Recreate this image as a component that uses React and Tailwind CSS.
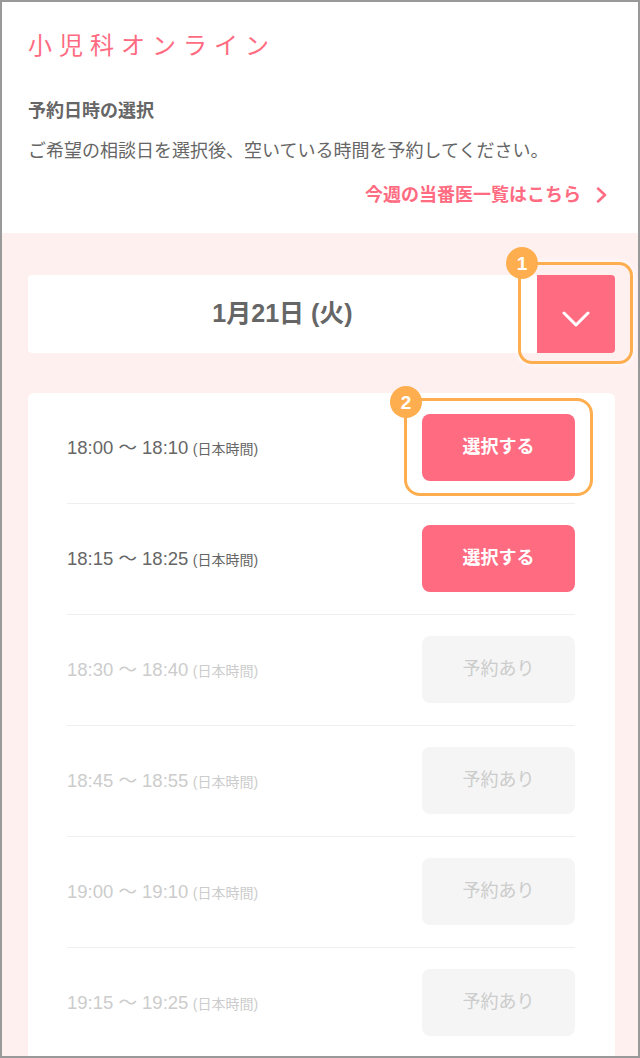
const slots = [
  { from: "18:00", to: "18:10", open: true, mark: 2 },
  { from: "18:15", to: "18:25", open: true },
  { from: "18:30", to: "18:40", open: false },
  { from: "18:45", to: "18:55", open: false },
  { from: "19:00", to: "19:10", open: false },
  { from: "19:15", to: "19:25", open: false },
];

function Badge({ n, className }) {
  return (
    <div
      className={
        "absolute flex h-[32px] w-[32px] items-center justify-center rounded-full bg-[#ffae4f] text-[19px] font-bold leading-none text-white " +
        className
      }
    >
      {n}
    </div>
  );
}

export default function App() {
  return (
    <div
      className="h-[1058px] overflow-hidden border-2 border-[#999] bg-white text-[#666]"
      style={{ fontFamily: '"Liberation Sans", "Noto Sans CJK JP", sans-serif' }}
    >
      {/* header */}
      <div className="px-[26px] pt-[28px] pb-[26px]">
        <h1 className="text-[24px] font-normal leading-[32px] tracking-[7px] text-[#ff6b81]">小児科オンライン</h1>
        <h2 className="mt-[37px] text-[18px] font-bold leading-[24px]">予約日時の選択</h2>
        <p className="mt-[16px] text-[18px] leading-[24px]">ご希望の相談日を選択後、空いている時間を予約してください。</p>
        <a className="mt-[20px] flex items-center justify-end gap-[15px] pr-[5px] text-[18px] font-bold leading-[24px] text-[#ff6b81]">
          今週の当番医一覧はこちら
          <svg width="11" height="16" viewBox="0 0 11 16" fill="none" stroke="currentColor" strokeWidth="2.5" strokeLinecap="round" strokeLinejoin="round">
            <polyline points="2,1.5 9,8 2,14.5" />
          </svg>
        </a>
      </div>

      {/* pink area */}
      <div className="h-full bg-[#fff0f0] pl-[26px] pr-[23px] pt-[42px]">
        {/* date picker */}
        <div className="relative flex h-[78px]">
          <div className="flex flex-1 items-center justify-center rounded-l-[4px] bg-white text-[25px] font-bold">
            1月21日 (火)
          </div>
          <button className="flex w-[78px] items-center justify-center rounded-r-[4px] bg-[#ff6b81] pt-[10px] text-white">
            <svg width="28" height="16" viewBox="0 0 28 16" fill="none" stroke="currentColor" strokeWidth="3" strokeLinecap="round" strokeLinejoin="round">
              <polyline points="2,2 14,14 26,2" />
            </svg>
          </button>
          <div className="absolute -right-[18px] -top-[13px] h-[102px] w-[115px] rounded-[14px] border-[3px] border-[#ffae4f] shadow-[0_0_6px_rgba(255,255,255,0.9)]">
            <Badge n="1" className="-left-[15px] -top-[18px]" />
          </div>
        </div>

        {/* slots */}
        <div className="mt-[40px] h-[700px] rounded-[6px] bg-white pl-[39px] pr-[40px]">
          {slots.map((s, i) => (
            <div
              key={i}
              className="flex items-center justify-between border-b border-[#efefef] pt-[21px] pb-[22px]"
            >
              <div className={s.open ? "text-[#666]" : "text-[#ccc]"}>
                <span className="text-[18.5px]">
                  {s.from} 〜 {s.to}
                </span>{" "}
                <span className="text-[14px]">(日本時間)</span>
              </div>
              <div className="relative">
                {s.open ? (
                  <button className="h-[67px] w-[153px] rounded-[8px] bg-[#ff6b81] text-[18px] font-bold text-white">
                    選択する
                  </button>
                ) : (
                  <button className="h-[67px] w-[153px] rounded-[8px] bg-[#f5f5f5] text-[18px] text-[#ccc]">
                    予約あり
                  </button>
                )}
                {s.mark && (
                  <div className="absolute -left-[18px] -right-[18px] -top-[16px] -bottom-[15px] rounded-[16px] border-[3px] border-[#ffae4f]">
                    <Badge n={s.mark} className="-left-[17px] -top-[15px]" />
                  </div>
                )}
              </div>
            </div>
          ))}
        </div>
      </div>
    </div>
  );
}
